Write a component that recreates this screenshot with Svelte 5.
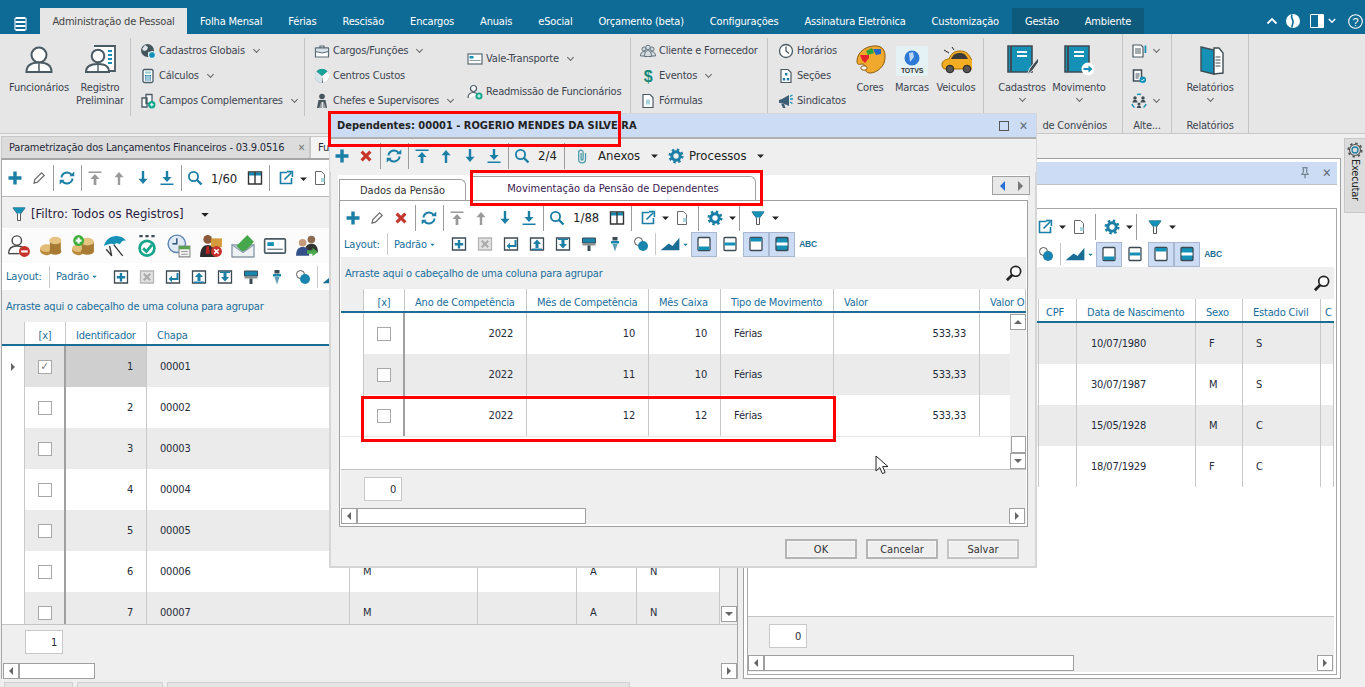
<script>
  const tabs = ['Folha Mensal', 'Férias', 'Rescisão', 'Encargos', 'Anuais', 'eSocial', 'Orçamento (beta)', 'Configurações', 'Assinatura Eletrônica', 'Customização']

  // toolbar tokens: name, name@width, "|" separator, "_n" spacer, "t36:text" label (tn36: no left padding)
  const leftBar = ['plus', 'edit', '|', 'refresh', '|', 'first:off', 'up:off', 'down', 'last', '|', 'search', 't36:1/60', 'columns', '|', '_3', 'export', 'caret@10', 'doc']
  const innerBar = ['plus', 'edit', 'x', '|', 'refresh', '|', 'first:off', 'up:off', 'down', 'last', '|', 'search', 't36:1/88', 'columns', '|', '_3', 'export', 'caret@10', 'doc', '_2', '|', '_3', 'gear', 'caret@10', '|', '_5', 'filter', 'caret@10']
  const rightBar = ['_285', 'export', 'caret@10', 'doc', '_2', '|', '_3', 'gear', 'caret@10', '|', '_5', 'filter', 'caret@10']
  const dialogBar = ['plus', 'x', '|', 'refresh', '|', 'first', 'up', 'down', 'last', '|', 'search', 't28:2/4', '|', '_4', 'clip', 't48:Anexos', '_7', 'caret@10', '_5', 'gear', 'tn67:Processos', 'caret@10']

  const layoutIcons = ['boxplus', 'boxx', 'boxenter', 'boxup', 'boxdown', 'roller', 'tack', 'circles']
  const people = ['personminus', 'coins', 'coinsplus', 'umbrella', 'checkdots', 'clockcal', 'suitx', 'mail', 'idcard', 'peoplego']

  const leftRows = [1, 2, 3, 4, 5, 6, 7].map((n) => ({ n, chapa: '0000' + n, mark: n > 5 }))
  const dialogRows = [[10, 10], [11, 10], [12, 12]]
  const rightRows = [['10/07/1980', 'F', 'S'], ['30/07/1987', 'M', 'S'], ['15/05/1928', 'M', 'C'], ['18/07/1929', 'F', 'C']]

  const D = '#3c4a52'
  const T = '#1591b8'
  const icons = {
    plus: '<path d="M6.3 1.5h3.4v4.8h4.8v3.4H9.7v4.8H6.3V9.7H1.5V6.3h4.8z" fill="#1a7ea6"/>',
    edit: '<path d="M3 13.2l.8-3.6L10.6 2.8l2.6 2.6-6.8 6.8z" fill="#fff" stroke="#6a6a6a" stroke-width="1.2"/>',
    x: '<path d="M2.5 4.7l2.2-2.2L8 5.8l3.3-3.3 2.2 2.2L10.2 8l3.3 3.3-2.2 2.2L8 10.2l-3.3 3.3-2.2-2.2L5.8 8z" fill="#c5352c"/>',
    refresh: '<path d="M2.5 7.5a5.6 5.6 0 0 1 10-2.8M13.5 8.5a5.6 5.6 0 0 1-10 2.8" fill="none" stroke="currentColor" stroke-width="2"/><path d="M10.3 6.2h5V1.6zM5.7 9.8h-5v4.6z" fill="currentColor"/>',
    first: '<path d="M1.5 1.5h13v1.6h-13zM8 4l4.5 5H9.4v6H6.6V9H3.5z" fill="currentColor"/>',
    up: '<path d="M8 2l4.5 5.2H9.2V15H6.8V7.2H3.5z" fill="currentColor"/>',
    down: '<path d="M8 14l4.5-5.2H9.2V1H6.8v7.8H3.5z" fill="currentColor"/>',
    last: '<path d="M1.5 13.4h13V15h-13zM8 12l4.5-5H9.2V1H6.8v6H3.5z" fill="currentColor"/>',
    search: '<circle cx="6.5" cy="6.5" r="4.6" fill="none" stroke="currentColor" stroke-width="1.8"/><path d="M10 10l4.5 4.5" stroke="currentColor" stroke-width="2.4"/>',
    mag: '<circle cx="9.5" cy="6.5" r="4.4" fill="#fff" stroke="#222" stroke-width="1.5"/><path d="M6.3 9.8l-4.6 4.6" stroke="#222" stroke-width="2.4"/>',
    columns: '<path d="M1.5 2h13v12h-13z" fill="#fff" stroke="#333" stroke-width="1.4"/><path d="M2 2.5h12v3H2z" fill="#1a86ad"/><path d="M8 2v12" stroke="#333" stroke-width="1.4"/>',
    export: '<path d="M9 2.5H2.5v11h11V8" fill="none" stroke="currentColor" stroke-width="1.6"/><path d="M6.5 9.5L13 3M9 1.6h5.4V7" fill="none" stroke="currentColor" stroke-width="1.6"/>',
    doc: '<path d="M3.5 1.5h6l3 3v10h-9z" fill="#fff" stroke="#666"/><path d="M9 8h3.5v4H9z" fill="#a8d5de"/>',
    gear: '<circle cx="8" cy="8" r="4.2" fill="none" stroke="currentColor" stroke-width="3"/><circle cx="8" cy="8" r="6.2" fill="none" stroke="currentColor" stroke-width="2.6" stroke-dasharray="2.4 2.47"/>',
    filter: '<path d="M2 2h12L9.5 8v6.5h-3V8z" fill="#fff" stroke="#555"/><path d="M1.5 1.5h13L9.8 7.5H6.2z" fill="#1591b8"/>',
    caret: '<path d="M3 6.5h10L8 11.5z" fill="#222"/>',
    caretb: '<path d="M4 6.5h8L8 10.5z" fill="currentColor"/>',
    clip: '<path d="M11.5 5v6.5a3.4 3.4 0 0 1-6.8 0V4.4a2.2 2.2 0 0 1 4.4 0v6.6a1 1 0 0 1-2 0V5" fill="none" stroke="#4b9aa8" stroke-width="1.3"/>',
    boxplus: `<path d="M1.5 2h13v12h-13z" fill="#fff" stroke="${D}" stroke-width="1.3"/><path d="M6.8 4h2.4v3h3v2.4h-3v3H6.8v-3h-3V7h3z" fill="#1a7ea6"/>`,
    boxx: '<path d="M1.5 2h13v12h-13z" fill="#e2e2e2" stroke="#b5b5b5" stroke-width="1.3"/><path d="M4 5.5L5.5 4 8 6.5 10.5 4 12 5.5 9.5 8l2.5 2.5-1.5 1.5L8 9.5 5.5 12 4 10.5 6.500 8z" fill="#aaa"/>',
    boxenter: `<path d="M1.5 2h13v12h-13z" fill="#fff" stroke="${D}" stroke-width="1.3"/><path d="M11.500 4v5H7V6.800L3.600 10 7 13.200V11h6.500V4z" fill="#1a7ea6"/>`,
    boxup: `<path d="M1.5 2h13v12h-13z" fill="#fff" stroke="${D}" stroke-width="1.3"/><path d="M8 3.500L12 8H9.500v4h-3V8H4zM3 12.500h10V14H3z" fill="#1a7ea6"/>`,
    boxdown: `<path d="M1.5 2h13v12h-13z" fill="#fff" stroke="${D}" stroke-width="1.3"/><path d="M8 12.500L12 8H9.500V4h-3v4H4zM3 2.500h10V4H3z" fill="#1a7ea6"/>`,
    roller: `<path d="M1.500 2h13v5h-13z" fill="#1a86ad" stroke="${D}"/><path d="M1.500 7h13v2.500h-13z" fill="#8a8f92"/><path d="M6.500 9.500h3V15h-3z" fill="${D}"/>`,
    tack: `<path d="M5.500 1h5v3.500h-5z" fill="${D}"/><path d="M4 5h8v2.500H4z" fill="#1a86ad"/><path d="M5.500 8h5L8 15.500z" fill="#5a9db5"/>`,
    circles: `<circle cx="5.500" cy="5.500" r="4" fill="#fff" stroke="#555"/><circle cx="10" cy="10" r="5" fill="#1a86ad"/>`,
    chart: `<path d="M.5 13L7 7.500l3 2L15.500 3v10z" fill="#1a6e96"/>`,
    tbottom: `<rect x="2" y="1.500" width="12" height="13" rx="1" fill="#fff" stroke="${D}" stroke-width="1.300"/><path d="M2.500 10.500h11v3.500h-11z" fill="${T}"/>`,
    tmid: `<rect x="2" y="1.500" width="12" height="13" rx="1" fill="#fff" stroke="${D}" stroke-width="1.300"/><path d="M2.500 6.500h11v3h-11z" fill="${T}"/>`,
    ttop: `<rect x="2" y="1.500" width="12" height="13" rx="1" fill="#fff" stroke="${D}" stroke-width="1.300"/><path d="M2.500 2h11v3.500h-11z" fill="${T}"/>`,
    tboth: `<rect x="2" y="1.500" width="12" height="13" rx="1" fill="${T}" stroke="${D}" stroke-width="1.300"/><path d="M2.500 6.500h11v3h-11z" fill="#fff"/>`,
    abc: '<text x="8" y="10.500" text-anchor="middle" font-family="Liberation Sans" font-weight="700" font-size="7.500" fill="#1a6e96">ABC</text>',
    pin: '<path d="M5 2h6M6 2.500v5L4 9.500h8l-2-2v-5M8 9.500V14" fill="none" stroke="#5a6a75" stroke-width="1.100"/>',
    gearo: '<circle cx="8" cy="8" r="3" fill="none" stroke="#1a7ea6" stroke-width="1.300"/><circle cx="8" cy="8" r="5.500" fill="none" stroke="#555" stroke-width="1.200"/><circle cx="8" cy="8" r="6.800" fill="none" stroke="#555" stroke-width="1.600" stroke-dasharray="2.500 2.840"/>',

    // ribbon, small
    globe: '<circle cx="7.500" cy="7.500" r="6.500" fill="#46545c"/><path d="M5 2l3 2-1 3-3 1-2-2zM8 9l4 1-2 4-2-1z" fill="#dfe6ea"/><circle cx="12" cy="12" r="3.500" fill="#1591b8" stroke="#fff"/>',
    calc: '<rect x="3" y="1.500" width="10" height="13" rx="1.500" fill="#fff" stroke="#4a5a63" stroke-width="1.300"/><path d="M5 3.500h6v2H5z" fill="#9cc"/><path d="M5 7h6v5.500H5z" fill="#1a7ea6"/><path d="M7 7v5.500M9 7v5.500M5 9h6M5 11h6" stroke="#fff" stroke-width=".7"/>',
    campos: '<path d="M2 5h5v9H2zM6 1.500h6v9H6z" fill="#fff" stroke="#4a5a63" stroke-width="1.300"/><circle cx="11.800" cy="11.800" r="3.700" fill="#12a88f"/><path d="M10 11.300h1.300V10h1v1.300h1.300v1h-1.300v1.300h-1v-1.300H10z" fill="#fff"/>',
    brief: '<path d="M1.500 5h13v9h-13z" fill="#fff" stroke="#5a6a73" stroke-width="1.200"/><path d="M1.500 5h13v3.500L8 10 1.500 8.500z" fill="#d7e5ea" stroke="#5a6a73"/><path d="M6 5V3h4v2" fill="none" stroke="#5a6a73" stroke-width="1.200"/>',
    pie: '<circle cx="8" cy="8" r="7" fill="#46545c"/><path d="M8 8L2.500 3.500a7 7 0 0 1 11 0z" fill="#15a39b"/><path d="M8 8l5.500-4.500A7 7 0 0 1 9 15z" fill="#fff"/><path d="M8 8v7a7 7 0 0 1-5.500-11.500z" fill="#d7e5ea"/>',
    chief: '<circle cx="8" cy="3.500" r="2.800" fill="#46545c"/><path d="M4.500 7h7l1.500 8h-1.500l-1-5.500v5.500h-1V9H7.500v6h-1V9.500l-1 5.500H3z" fill="#46545c"/>',
    card: '<rect x="1" y="3" width="14" height="10" fill="#fff" stroke="#5a6a73" stroke-width="1.200"/><path d="M2.500 5h4v2.500h-4z" fill="#1591b8"/><path d="M2.500 9.500h11" stroke="#8a979e"/>',
    readm: '<circle cx="6.500" cy="4.500" r="3" fill="#fff" stroke="#4a5a63" stroke-width="1.200"/><path d="M1 14c0-4 2.500-5.500 5.500-5.500S10 9.500 10.500 11" fill="#fff" stroke="#4a5a63" stroke-width="1.200"/><circle cx="12" cy="12" r="3.500" fill="#12a88f"/><path d="M10.300 11.500h1.200v-1.200h1v1.200h1.200v1h-1.200v1.200h-1v-1.200h-1.200z" fill="#fff"/>',
    people: '<g fill="#d5dbde" stroke="#5a6a73" stroke-width=".9"><circle cx="4" cy="6" r="2"/><circle cx="12" cy="6" r="2"/><path d="M0.500 13c0-3 1.500-4.500 3.500-4.500S7 10 7 13zM9 13c0-3 1.500-4.500 3-4.500s3.500 1.500 3.500 4.500z"/><circle cx="8" cy="4.500" r="2.300"/><path d="M4.500 13.500c0-4 1.500-6 3.500-6s3.500 2 3.500 6z"/></g>',
    dollar: '<text x="8" y="14" text-anchor="middle" font-family="Liberation Sans" font-weight="700" font-size="16" fill="#138a78">$</text>',
    formula: '<path d="M3 1.500h7l3 3v10H3z" fill="#fff" stroke="#4a5a63" stroke-width="1.200"/><path d="M6 6.500h4v5H6z" fill="#a8d5de"/>',
    clock: '<circle cx="8" cy="8" r="6.500" fill="#fff" stroke="#4a5a63" stroke-width="1.300"/><path d="M8 3.500V8l3 2.500" fill="none" stroke="#4a5a63" stroke-width="1.300"/>',
    secoes: '<path d="M3 1.500h7l3 3v10H3z" fill="#fff" stroke="#4a5a63" stroke-width="1.200"/><path d="M7 5h2.400v2.400H7zM4.800 10h2.400v2.400H4.800zM8.800 10h2.400v2.400H8.800z" fill="#1a7ea6"/>',
    mega: '<path d="M1 7l3-1 7-4v11L4 10H1z" fill="#3d5f75"/><path d="M3 10.500h3L7.500 15H5z" fill="#3d5f75"/><path d="M12 6h3M12 3.500l2.500-1.500M12 9l2.500 1.500" stroke="#1591b8" stroke-width="1.300"/>',
    doclist: '<path d="M2 2h8l2 2v10H2z" fill="#fff" stroke="#4a5a63" stroke-width="1.200"/><path d="M4 6h6M4 8h6M4 10h6" stroke="#4a5a63"/><path d="M13.500 2.500h1.800V10h-1.800z" fill="#1591b8"/>',
    doccheck: '<path d="M2.500 2h8v11h-8z" fill="#fff" stroke="#3f4c53" stroke-width="1.500"/><path d="M4.500 6h4M4.500 8h4M4.500 10h3" stroke="#3f4c53"/><circle cx="11.800" cy="11.800" r="3.300" fill="#1591b8"/><path d="M10.300 11.800l1.100 1.100 2-2" fill="none" stroke="#fff"/>',
    cycle: '<g fill="#3f4c53"><circle cx="4" cy="5" r="1.700"/><path d="M1.500 9.500C1.500 7.500 2.500 7 4 7s2.500.5 2.500 2.500z"/><circle cx="12" cy="5" r="1.700"/><path d="M9.500 9.500c0-2 1-2.500 2.500-2.500s2.500.5 2.500 2.500z"/><circle cx="8" cy="11" r="1.500"/><path d="M5.800 15c0-1.800 1-2.300 2.200-2.300s2.200.5 2.200 2.300z"/></g><path d="M6 1.500a7 7 0 0 1 4 0M1 11a7 7 0 0 0 2.500 3.500M15 11a7 7 0 0 1-2.500 3.500" fill="none" stroke="#1591b8" stroke-width="1.500"/>',

    // row of coloured icons
    personminus: '<circle cx="9" cy="6" r="4.300" fill="#fff" stroke="#4a4a4a" stroke-width="1.300"/><path d="M1.500 18c0-5 3.500-7 7.500-7s6 1 7 3" fill="#fff" stroke="#4a4a4a" stroke-width="1.300"/><path d="M1.500 18h10" stroke="#4a4a4a" stroke-width="1.300"/><circle cx="16" cy="16" r="5" fill="#c8322c"/><path d="M13 15h6v2h-6z" fill="#fff"/>',
    coins: '<ellipse cx="7" cy="15" rx="6" ry="4.500" fill="#b98a3c"/><ellipse cx="7" cy="13" rx="6" ry="3.500" fill="#e2bd78"/><path d="M10 6h10v10H10z" fill="#a77b33"/><ellipse cx="15" cy="6" rx="5.500" ry="3.500" fill="#e6c482"/><ellipse cx="15" cy="16" rx="5.500" ry="3" fill="#a77b33"/>',
    coinsplus: '<ellipse cx="7" cy="15" rx="6" ry="4.500" fill="#b98a3c"/><ellipse cx="7" cy="13" rx="6" ry="3.500" fill="#e2bd78"/><path d="M10 7h11v9H10z" fill="#a77b33"/><ellipse cx="15" cy="7" rx="6" ry="3.500" fill="#e6c482"/><ellipse cx="15" cy="16" rx="6" ry="3" fill="#a77b33"/><circle cx="7" cy="6" r="5" fill="#3fae3c"/><path d="M4.300 5h1.700V3.300h2V5h1.700v2H8v1.700H6V7H4.300z" fill="#fff"/>',
    umbrella: '<path d="M1 11C2 5 8 1 14 2c3 .5 5 1.500 7 4-4-.5-4 2-6 3.500-1.500-1.500-3.500-1.500-5 .5-1.500-2-5.500-.5-9 1z" fill="#1591b8"/><path d="M3 14l5 6-2-9M10 10l8 10" fill="none" stroke="#333" stroke-width="1.200"/>',
    checkdots: '<circle cx="11" cy="13" r="8" fill="#14a58a"/><circle cx="11" cy="13" r="5.500" fill="#fff"/><path d="M7.500 13l3 3 5-6" fill="none" stroke="#14a58a" stroke-width="2.600"/><path d="M4 1h3v2H4zM9.500 1h3v2h-3zM15 1h3v2h-3z" fill="#3f4c53"/>',
    clockcal: '<circle cx="9" cy="9" r="8" fill="#dfeaf4" stroke="#5b84b0" stroke-width="1.300"/><path d="M9 4v5H5" fill="none" stroke="#2c4f78" stroke-width="1.300"/><path d="M11 11h10v10H11z" fill="#f3f3f3" stroke="#888"/><path d="M11 11h10v3H11z" fill="#59a14f"/><path d="M13 16h6M13 18.500h6" stroke="#999"/>',
    suitx: '<circle cx="8" cy="5" r="4" fill="#8b5a3c"/><path d="M1 21c0-8 3-11 7-11s7 3 7 11z" fill="#2c2a2a"/><path d="M7 11h2l1 7H6z" fill="#b22"/><path d="M11 4h10v8H11z" fill="#d49b3c"/><circle cx="16" cy="16" r="5" fill="#c8322c"/><path d="M14 14l4 4m0-4l-4 4" stroke="#fff" stroke-width="1.400"/>',
    mail: '<path d="M1 10h20v11H1z" fill="#d4dadf" stroke="#8a9aa8"/><path d="M5 11L15 1l6 6-7 8-4 1z" fill="#46a84a"/><path d="M1 10l10 7 10-7v11H1z" fill="#eef1f3" stroke="#8a9aa8"/>',
    idcard: '<rect x="1.500" y="4.500" width="19" height="13" rx="1" fill="#fff" stroke="#4a5a63" stroke-width="1.500"/><path d="M4 7.500h6v3.500H4z" fill="#1591b8"/><path d="M4 14h14" stroke="#6e7c84" stroke-width="1.200"/>',
    peoplego: '<circle cx="15" cy="5" r="3.500" fill="#8b6a50"/><path d="M9 17c0-6 2.500-8 6-8s6 2 6 8z" fill="#333"/><circle cx="7" cy="8" r="3.500" fill="#c39a7a"/><path d="M1 20c0-6 2.500-8 6-8s6 2 6 8z" fill="#33508a"/><path d="M11 15h5v-2.500l5 4-5 4V18h-5z" fill="#46a84a"/>',

    // ribbon, large
    person: '<circle cx="16" cy="11" r="7.500" fill="#fff" stroke="#4a5a63" stroke-width="2"/><path d="M3.500 28c0-6 4.500-9.500 12.500-9.500S28.500 22 28.500 28z" fill="#fff" stroke="#4a5a63" stroke-width="2"/><path d="M16 19v9" stroke="#4a5a63" stroke-width="1.500"/>',
    registro: '<path d="M10 2h21v25H14" fill="#fff" stroke="#4a5a63" stroke-width="1.800"/><path d="M24 7h4M24 11h4M24 15h4M24 19h4" stroke="#1591b8" stroke-width="2"/><circle cx="14" cy="12" r="6.300" fill="#fff" stroke="#4a5a63" stroke-width="2"/><path d="M2 28c0-5.500 4-8 12-8s11 2.500 11 8z" fill="#fff" stroke="#4a5a63" stroke-width="2"/><path d="M14 20v8" stroke="#4a5a63" stroke-width="1.400"/>',
    palette: '<path d="M3 17C3 7 14 1 23 2s9 10 7 17c-2 5-8 10-14 10-4 0-5-3-5-6 0-2-1-3-3-3s-5 2-5-3z" fill="#f0a92d" stroke="#8a5a10"/><ellipse cx="10" cy="24" rx="3.200" ry="2.200" fill="#f6f6f6" stroke="#8a5a10"/><path d="M6 11h9v3l-4 5-3-3z" fill="#e2232a"/><path d="M12 7l6-3 2 5-6 2z" fill="#2aa339"/><path d="M19 5h8v5l-5 1z" fill="#1f67c9"/>',
    marcas: '<path d="M0 2h32v32H0z" fill="#e4f2f5"/><circle cx="16" cy="14" r="7.500" fill="#2c79d6"/><path d="M13 9l4-1 1 5-4 5z" fill="#bcd7f5"/><text x="16" y="29" text-anchor="middle" font-family="Liberation Sans" font-weight="700" font-size="7" fill="#333">TOTVS</text>',
    car: '<path d="M2 20c0-3 4-5 7-5 2-5 5-8 11-8s9 3 11 8c2 1 3 3 3 6 0 2-1 4-3 4H5c-2 0-3-2-3-5z" fill="#f2ad22" stroke="#a66d00"/><path d="M11 15c2-4 4-6 9-6 4 0 6 2 8 6z" fill="#3a3a3a"/><circle cx="10" cy="25" r="3.800" fill="#555" stroke="#222"/><circle cx="27" cy="25" r="3.800" fill="#555" stroke="#222"/><path d="M4 6l5 3M12 3l2 3" stroke="#222"/>',
    bookpen: `<path d="M2 2h24v26H2z" fill="${T}" stroke="#3f4c53" stroke-width="1.600"/><path d="M5 2v26" stroke="#3f4c53" stroke-width="2"/><path d="M11 7h10v2H11zM11 11h10v2H11z" fill="#fff"/><path d="M21 31l3-7 8-10 2 2-7 10z" fill="#3f4c53" stroke="#e6e6e6"/>`,
    bookgo: `<path d="M2 2h24v26H2z" fill="${T}" stroke="#3f4c53" stroke-width="1.600"/><path d="M5 2v26" stroke="#3f4c53" stroke-width="2"/><path d="M11 7h10v2H11zM11 11h10v2H11z" fill="#fff"/><circle cx="25" cy="25" r="6.500" fill="#fff"/><path d="M20.500 24h5v-2.500l4 3.500-4 3.500V26h-5z" fill="${T}"/>`,
    report: `<path d="M7 3l13 3v24l-13-3z" fill="${T}" stroke="#3f4c53" stroke-width="1.400"/><path d="M20 4h5l4 5v20l-9 1z" fill="#fff" stroke="#3f4c53" stroke-width="1.400"/><path d="M21.500 13h5M21.500 16h5M21.500 19h5M21.500 22h5" stroke="#3f4c53" stroke-width="1.200"/>`
  }

  function token(s) {
    if (s === '|') return { kind: 'sep' }
    if (s[0] === '_') return { kind: 'gap', w: +s.slice(1) }
    const m = s.match(/^t(n?)(\d+):(.+)$/)
    if (m) return { kind: 'text', tight: !!m[1], w: +m[2], text: m[3] }
    const [body, w] = s.split('@')
    const [name, off] = body.split(':')
    return { kind: 'icon', name, off, w: w ? +w : 24 }
  }
</script>

{#snippet ic(name, size = 16, cls = '', box = 16)}
  <svg class="ic {cls}" width={size} height={size} viewBox="0 0 {box} {box}">{@html icons[name]}</svg>
{/snippet}

{#snippet toolbar(items)}
  {#each items.map(token) as t}
    {#if t.kind === 'sep'}
      <span class="tb-sep"></span>
    {:else if t.kind === 'gap'}
      <span class="tb-gap" style:width="{t.w}px"></span>
    {:else if t.kind === 'text'}
      <span class="tb-text" class:tight={t.tight} style:width="{t.w}px">{t.text}</span>
    {:else}
      <span class="tb-btn" style:width="{t.w}px">{@render ic(t.name, t.w < 24 ? 11 : 16, t.off ? 'off' : '')}</span>
    {/if}
  {/each}
{/snippet}

<!-- part: 'all', 'start' (only up to the chart) or 'end' (labels sit under the dialog) -->
{#snippet layoutRow(cls, part = 'all')}
  <div class="layout {cls}">
    {#if part === 'end'}
      <span class="lay-label"></span>
      <span class="lay-sep"></span>
      <span class="lay-pick"></span>
    {:else}
      <span class="lay-label">Layout:</span>
      <span class="lay-sep"></span>
      <span class="lay-pick">Padrão {@render ic('caretb', 9)}</span>
    {/if}
    {#each layoutIcons as name}
      <span class="lay-btn">{@render ic(name, 16)}</span>
    {/each}
    <span class="lay-sep tight"></span>
    <span class="lay-chart">{@render ic('chart', 20)}</span>
    {#if part !== 'start'}
      <span class="lay-caret">{@render ic('caretb', 9)}</span>
      <span class="lay-btn on">{@render ic('tbottom', 16)}</span>
      <span class="lay-btn">{@render ic('tmid', 16)}</span>
      <span class="lay-btn on">{@render ic('ttop', 16)}</span>
      <span class="lay-btn on">{@render ic('tboth', 16)}</span>
      <span class="lay-btn">{@render ic('abc', 18)}</span>
    {/if}
  </div>
{/snippet}

{#snippet rowLink(icon, label, chevron)}
  <div class="rlink">
    <span class="rlink-ic">{@render ic(icon, 16)}</span>
    <span>{label}</span>
    {#if chevron}<span class="chev"></span>{/if}
  </div>
{/snippet}

{#snippet bigBtn(icon, lines, chevron, cls = '')}
  <div class="big {cls}">
    <span class="big-ic">{@render ic(icon, 32, '', 32)}</span>
    {#each lines as l}<span>{l}</span>{/each}
    {#if chevron}<span class="chev down"></span>{/if}
  </div>
{/snippet}

{#snippet arrowBtn(dir)}
  <span class="sbtn"><i class={dir}></i></span>
{/snippet}

{#snippet footer(cls, value)}
  <div class="foot {cls}">
    <div class="count">{value}</div>
    <div class="hscroll">
      <div class="hthumb">{@render arrowBtn('left')}<span class="thumb"></span></div>
      {@render arrowBtn('right')}
    </div>
  </div>
{/snippet}

<div class="app">
  <header class="top">
    <span class="menu">
      <svg width="13" height="14" viewBox="0 0 13 14"><path d="M1.500 1h10M1.500 5h10M1.500 9h10M1.500 13h10" stroke="#fff" stroke-width="2"/><path d="M1 1v12M12 1v12" stroke="#fff"/></svg>
    </span>
    <nav class="tabs">
      <span class="tab active">Administração de Pessoal</span>
      {#each tabs as t}<span class="tab">{t}</span>{/each}
      <span class="dark">
        <span class="tab">Gestão</span>
        <span class="tab">Ambiente</span>
      </span>
    </nav>
    <div class="top-right">
      <svg width="12" height="12" viewBox="0 0 12 12"><path d="M1.500 8.500L6 4l4.500 4.500" fill="none" stroke="#fff" stroke-width="1.800"/></svg>
      <svg width="16" height="16" viewBox="0 0 16 16"><circle cx="8" cy="8" r="7" fill="#fff"/><path d="M7 1.500c-2 4 2 5 1 8-.5 2-1 3-1 5" fill="none" stroke="#0d6b96" stroke-width="1.600"/></svg>
      <svg class="tr-win" width="14" height="14" viewBox="0 0 14 14"><path d="M.5.5h13v13H.5zM8.500.5v13" fill="none" stroke="#fff"/><path d="M9 1h4v12H9z" fill="#fff"/></svg>
      <svg class="tr-chev" width="8" height="8" viewBox="0 0 8 8"><path d="M.8 2l3.200 3.200L7.200 2" fill="none" stroke="#fff" stroke-width="1.400"/></svg>
      <svg class="tr-help" width="15" height="15" viewBox="0 0 15 15"><circle cx="7.500" cy="7.500" r="6.800" fill="none" stroke="#fff" stroke-width="1.100"/><text x="7.500" y="11.500" text-anchor="middle" font-family="Liberation Sans" font-size="11" fill="#fff">?</text></svg>
    </div>
  </header>

  <section class="ribbon">
    <div class="rg g1">
      {@render bigBtn('person', ['Funcionários'], false, 'b-func')}
      {@render bigBtn('registro', ['Registro', 'Preliminar'], false, 'b-reg')}
    </div>
    <div class="rg g2 rcol">
      {@render rowLink('globe', 'Cadastros Globais', true)}
      {@render rowLink('calc', 'Cálculos', true)}
      {@render rowLink('campos', 'Campos Complementares', true)}
    </div>
    <div class="rg g3">
      <div class="rcol">
        {@render rowLink('brief', 'Cargos/Funções', true)}
        {@render rowLink('pie', 'Centros Custos', false)}
        {@render rowLink('chief', 'Chefes e Supervisores', true)}
      </div>
      <div class="rcol two">
        {@render rowLink('card', 'Vale-Transporte', true)}
        {@render rowLink('readm', 'Readmissão de Funcionários', false)}
      </div>
    </div>
    <div class="rg g4 rcol">
      {@render rowLink('people', 'Cliente e Fornecedor', false)}
      {@render rowLink('dollar', 'Eventos', true)}
      {@render rowLink('formula', 'Fórmulas', false)}
    </div>
    <div class="rg g5">
      <div class="rcol">
        {@render rowLink('clock', 'Horários', false)}
        {@render rowLink('secoes', 'Seções', false)}
        {@render rowLink('mega', 'Sindicatos', false)}
      </div>
      {@render bigBtn('palette', ['Cores'], false, 'b-cores')}
      {@render bigBtn('marcas', ['Marcas'], false, 'b-marcas')}
      {@render bigBtn('car', ['Veiculos'], false, 'b-car')}
    </div>
    <div class="rg g6 tall">
      <div class="rg-body">
        {@render bigBtn('bookpen', ['Cadastros'], true, 'b-cad')}
        {@render bigBtn('bookgo', ['Movimento'], true, 'b-mov')}
      </div>
      <div class="rg-label conv">de Convênios</div>
    </div>
    <div class="rg g7 tall">
      <div class="rg-col">
        <div class="mini">{@render ic('doclist', 16)}<span class="chev"></span></div>
        <div class="mini">{@render ic('doccheck', 16)}</div>
        <div class="mini">{@render ic('cycle', 16)}<span class="chev"></span></div>
      </div>
      <div class="rg-label">Alte...</div>
    </div>
    <div class="rg g8 tall">
      <div class="rg-body">
        {@render bigBtn('report', ['Relatórios'], true, 'b-rel')}
      </div>
      <div class="rg-label">Relatórios</div>
    </div>
  </section>

  <main class="work">
    <div class="col-left">
      <div class="doc-tabs">
        <span class="doc-tab">Parametrização dos Lançamentos Financeiros - 03.9.0516 <b>✕</b></span>
        <span class="doc-tab cur">Fu</span>
      </div>
      <div class="win">
        <div class="bar bar-left">{@render toolbar(leftBar)}</div>
        <div class="filter">
          {@render ic('filter', 16)}
          <span>[Filtro: Todos os Registros]</span>
          {@render ic('caret', 12)}
        </div>
        <div class="people">
          {#each people as p}
            <span class="pbtn">{@render ic(p, 24, '', 22)}</span>
          {/each}
        </div>
        {@render layoutRow('lay-left', 'start')}
        <div class="group grp-left">Arraste aqui o cabeçalho de uma coluna para agrupar</div>
        <div class="grid-wrap left-wrap">
          <div class="grid-main">
            <div class="row head l-cols">
              <span class="c ind"></span>
              <span class="c chk">[x]</span>
              <span class="c">Identificador</span>
              <span class="c">Chapa</span>
              <span class="c"></span><span class="c"></span><span class="c"></span><span class="c"></span>
            </div>
            {#each leftRows as r, i}
              <div class="row l-cols" class:alt={i % 2 === 0}>
                <span class="c ind">{#if i === 0}<i class="right small"></i>{/if}</span>
                <span class="c chk" class:sel={i === 0}><span class="box" class:ticked={i === 0}>{#if i === 0}✓{/if}</span></span>
                <span class="c num pad" class:sel={i === 0}>{r.n}</span>
                <span class="c pad">{r.chapa}</span>
                <span class="c pad">{r.mark ? 'M' : ''}</span>
                <span class="c"></span>
                <span class="c pad">{r.mark ? 'A' : ''}</span>
                <span class="c pad">{r.mark ? 'N' : ''}</span>
              </div>
            {/each}
          </div>
          <div class="vscroll end">{@render arrowBtn('down')}</div>
        </div>
        {@render footer('f-left', 1)}
      </div>
      <div class="bottom-tabs">
        <span class="bt b1"></span><span class="bt b2"></span><span class="bt b3"></span>
      </div>
    </div>

    <div class="rwin">
      <div class="r-title">
        <span>{@render ic('pin', 14)}</span>
        <span class="r-close">✕</span>
      </div>
      <div class="r-blank"></div>
      <div class="r-inner">
        <div class="bar bar-right">{@render toolbar(rightBar)}</div>
        {@render layoutRow('lay-right', 'end')}
        <div class="group grp-right"><span></span>{@render ic('mag', 18)}</div>
        <div class="row head r-cols">
          <span class="c"></span>
          <span class="c cpf">CPF</span>
          <span class="c">Data de Nascimento</span>
          <span class="c">Sexo</span>
          <span class="c">Estado Civil</span>
          <span class="c clip">C</span>
        </div>
        <div class="r-body">
          {#each rightRows as r, i}
            <div class="row r-cols" class:alt={i % 2 === 0}>
              <span class="c"></span>
              <span class="c"></span>
              <span class="c pad wide">{r[0]}</span>
              <span class="c pad">{r[1]}</span>
              <span class="c pad">{r[2]}</span>
              <span class="c"></span>
            </div>
          {/each}
        </div>
        {@render footer('f-right', 0)}
      </div>
    </div>

    <aside class="side">
      {@render ic('gearo', 16)}
      <span>Executar</span>
    </aside>
  </main>

  <!-- janela modal, fica sobre o resto -->
  <section class="dialog">
    <div class="d-title">
      <b>Dependentes: 00001 - ROGERIO MENDES DA SILVEIRA</b>
      <span class="d-ctrl"><i class="sq"></i><span class="r-close">✕</span></span>
    </div>
    <div class="bar bar-dialog">{@render toolbar(dialogBar)}</div>
    <div class="d-tabs">
      <span class="d-tab">Dados da Pensão</span>
      <span class="d-tab cur">Movimentação da Pensão de Dependentes</span>
      <span class="d-arrows"><i class="tri-l"></i><i class="tri-r"></i></span>
    </div>
    <div class="d-panel">
      <div class="bar bar-inner">{@render toolbar(innerBar)}</div>
      {@render layoutRow('lay-dialog')}
      <div class="group grp-dialog"><span>Arraste aqui o cabeçalho de uma coluna para agrupar</span>{@render ic('mag', 18)}</div>
      <div class="row head d-head">
        <span class="c ind"></span>
        <span class="c chk">[x]</span>
        <span class="c">Ano de Competência</span>
        <span class="c">Mês de Competência</span>
        <span class="c">Mês Caixa</span>
        <span class="c">Tipo de Movimento</span>
        <span class="c">Valor</span>
        <span class="c">Valor Or</span>
      </div>
      <div class="grid-wrap d-wrap">
        <div class="grid-main">
          {#each dialogRows as r, i}
            <div class="row d-cols" class:alt={i === 1}>
              <span class="c ind"></span>
              <span class="c chk"><span class="box"></span></span>
              <span class="c num pad">2022</span>
              <span class="c num pad">{r[0]}</span>
              <span class="c num pad">{r[1]}</span>
              <span class="c pad">Férias</span>
              <span class="c num pad">533,33</span>
              <span class="c"></span>
            </div>
          {/each}
        </div>
        <div class="vscroll">
          {@render arrowBtn('up')}
          <span class="vthumb"></span>
          {@render arrowBtn('down')}
        </div>
      </div>
      {@render footer('f-dialog', 0)}
    </div>
    <div class="d-actions">
      <button>OK</button>
      <button>Cancelar</button>
      <button class="def">Salvar</button>
    </div>
  </section>

  <div class="mark m1"></div>
  <div class="mark m2"></div>
  <div class="mark m3"></div>

  <svg class="cursor" width="15" height="21" viewBox="0 0 15 21">
    <path d="M1 1v15l3.800-3.400 2.600 6 2.800-1.200-2.600-5.800H13z" fill="#fff" stroke="#222" stroke-width="1"/>
  </svg>
</div>

<style>
  :global(body) {
    margin: 0;
  }

  .app {
    position: relative;
    width: 1365px;
    height: 687px;
    overflow: hidden;
    background: #efefef;
    font-family: "DejaVu Sans Condensed", "DejaVu Sans", sans-serif;
    font-size: 11px;
    letter-spacing: -0.2px;
    color: #262b3a;
  }

  .ic {
    display: block;
    flex: none;
    color: #1a7ea6;
  }
  .ic.off {
    color: #9a9a9a;
  }

  /* barra superior */
  .top {
    display: flex;
    height: 34px;
    background: #0d6b96;
    color: #fff;
  }
  .menu {
    display: flex;
    width: 40px;
    padding: 17px 0 0 14px;
    box-sizing: border-box;
  }
  .tabs {
    display: flex;
    padding-top: 8px;
    letter-spacing: -0.18px;
  }
  .tab {
    display: flex;
    align-items: center;
    padding: 0 13px;
    height: 26px;
    white-space: nowrap;
  }
  .tab.active {
    background: #e6e6e6;
    color: #444;
    width: 147px;
    box-sizing: border-box;
    justify-content: center;
    padding: 0;
  }
  .dark {
    display: flex;
    background: #0d5a7c;
  }
  .top-right {
    display: flex;
    align-items: center;
    margin-left: auto;
    padding: 8px 2px 0 0;
    gap: 7px;
  }
  .tr-win {
    margin-left: 2px;
  }
  .tr-chev {
    margin-left: -3px;
  }
  .tr-help {
    margin-left: 5px;
  }

  /* ribbon */
  .ribbon {
    display: flex;
    height: 100px;
    background: #e6e6e6;
    border-bottom: 1px solid #c8c8c8;
    box-sizing: border-box;
  }
  .rg {
    display: flex;
    flex: none;
    box-sizing: border-box;
    height: 78px;
    margin-top: 4px;
    border-right: 1px solid #c4c4c4;
    color: #3c4450;
  }
  .rg.tall {
    height: 99px;
    margin-top: 0;
    flex-direction: column;
    padding-top: 4px;
  }
  .g1 { width: 131px; }
  .g2 { width: 174px; padding-left: 9px; }
  .g3 { width: 326px; padding-left: 9px; }
  .g4 { width: 137px; padding-left: 9px; }
  .g5 { width: 216px; padding-left: 10px; }
  .g6 { width: 139px; }
  .g7 { width: 49px; }
  .g8 { width: 77px; }

  .rcol {
    display: flex;
    flex-direction: column;
  }
  .rcol.two {
    margin-left: 14px;
    gap: 8px;
    padding-top: 8px;
  }
  .rlink {
    display: flex;
    align-items: center;
    height: 25px;
    white-space: nowrap;
  }
  .rlink-ic {
    width: 19px;
  }
  .chev {
    width: 4px;
    height: 4px;
    margin-left: 9px;
    margin-top: -3px;
    border-right: 1.5px solid #666;
    border-bottom: 1.5px solid #666;
    transform: rotate(45deg);
  }
  .chev.down {
    margin: -2px 0 0;
  }

  .big {
    display: flex;
    flex-direction: column;
    align-items: center;
    line-height: 13px;
    white-space: nowrap;
  }
  .big-ic {
    height: 35px;
    padding-top: 6px;
    margin-bottom: 2px;
  }
  .b-func { width: 68px; margin-left: 5px; }
  .b-reg { width: 54px; }
  .b-cores { width: 40px; margin-left: 4px; }
  .b-marcas { width: 42px; margin-left: 1px; }
  .b-car { width: 46px; }
  .b-cad { width: 56px; margin-left: 10px; }
  .b-mov { width: 58px; }
  .b-rel { width: 76px; }
  .rg-body {
    display: flex;
    flex: 1;
  }
  .rg-body .big .chev {
    margin-top: 2px;
  }
  .rg-label {
    height: 14px;
    line-height: 13px;
    text-align: center;
    white-space: nowrap;
  }
  .rg-label.conv {
    text-align: right;
    padding-right: 15px;
  }
  .rg-col {
    flex: 1;
    display: flex;
    flex-direction: column;
  }
  .mini {
    display: flex;
    align-items: center;
    height: 25px;
    padding-left: 8px;
  }
  .mini .chev {
    margin-left: 7px;
  }

  /* area de trabalho */
  .work {
    display: flex;
    height: 553px;
  }
  .col-left {
    width: 743px;
    flex: none;
    padding-left: 1px;
    box-sizing: border-box;
  }
  .doc-tabs {
    display: flex;
    height: 24px;
    padding-top: 2px;
    box-sizing: border-box;
  }
  .doc-tab {
    display: flex;
    align-items: center;
    justify-content: space-between;
    width: 309px;
    padding: 0 4px 0 7px;
    box-sizing: border-box;
    background: #dcdcdc;
    border: 1px solid #c8c8c8;
    border-bottom: 0;
    white-space: nowrap;
  }
  .doc-tab b {
    font-weight: 400;
    color: #777;
    font-size: 10px;
  }
  .doc-tab.cur {
    width: 120px;
    background: #f4f4f4;
  }

  .win {
    display: flex;
    flex-direction: column;
    width: 737px;
    height: 521px;
    box-sizing: border-box;
    border: 1px solid #a6a6a6;
    border-top-width: 2px;
    background: #fff;
  }
  .bar {
    display: flex;
    align-items: center;
    flex: none;
    white-space: nowrap;
    overflow: hidden;
  }
  .tb-btn, .tb-gap {
    display: flex;
    justify-content: center;
    flex: none;
  }
  .tb-text {
    flex: none;
    padding-left: 4px;
    box-sizing: border-box;
    font-size: 13px;
    letter-spacing: 0;
    color: #222;
  }
  .tb-text.tight {
    padding-left: 1px;
  }
  .tb-sep {
    flex: none;
    width: 1px;
    height: 26px;
    margin: 0 1px 0 2px;
    background: #9c9c9c;
  }
  .bar-left {
    height: 36px;
    padding-left: 1px;
    border-bottom: 1px solid #b9b9b9;
  }
  .filter {
    display: flex;
    align-items: center;
    flex: none;
    gap: 4px;
    height: 31px;
    padding: 2px 0 0 9px;
    box-sizing: border-box;
    background: #f0f0f0;
    font-size: 13px;
    letter-spacing: 0;
    color: #2a2140;
  }
  .filter span {
    width: 164px;
    white-space: nowrap;
  }
  .people {
    display: flex;
    flex: none;
    align-items: center;
    height: 35px;
    padding-left: 1px;
    border-top: 1px solid #fff;
    box-sizing: border-box;
    background: #fbfbfb;
  }
  .pbtn {
    width: 32px;
    display: flex;
    justify-content: center;
  }

  .layout {
    display: flex;
    align-items: center;
    flex: none;
    white-space: nowrap;
    overflow: hidden;
    height: 27px;
    background: #fff;
  }
  .lay-label {
    flex: none;
    width: 43px;
    color: #1a6e9c;
  }
  .lay-sep {
    flex: none;
    width: 1px;
    height: 22px;
    background: #c8c8c8;
    margin-right: 6px;
  }
  .lay-sep.tight {
    margin: 0 3px 0 1px;
  }
  .lay-pick {
    display: flex;
    align-items: center;
    flex: none;
    width: 52px;
    gap: 1px;
    color: #1a6e9c;
  }
  .lay-btn {
    display: flex;
    align-items: center;
    justify-content: center;
    flex: none;
    width: 26px;
    height: 25px;
    box-sizing: border-box;
  }
  .lay-btn.on {
    background: #cddcf5;
    border: 1px solid #a9b8d0;
  }
  .lay-chart {
    width: 22px;
    display: flex;
    justify-content: center;
  }
  .lay-caret {
    width: 10px;
  }
  .lay-left { padding-left: 4px; }
  .lay-right { padding-left: 1px; height: 26px; }
  .lay-dialog { padding-left: 3px; height: 26px; }

  .group {
    display: flex;
    align-items: center;
    justify-content: space-between;
    flex: none;
    height: 32px;
    background: #efefef;
    color: #1a6e9c;
    padding: 0 3px 0 4px;
    box-sizing: border-box;
    white-space: nowrap;
  }

  .row {
    display: grid;
    height: 41px;
    background: #fff;
  }
  .row.alt {
    background: #ebebeb;
  }
  .row.head {
    height: 24px;
    box-sizing: border-box;
    background: #fff;
    color: #1a6e9c;
    border-bottom: 2px solid #1a6e96;
  }
  .row.head .c {
    padding: 4px 0 0 10px;
    justify-content: flex-start;
    overflow: hidden;
    white-space: nowrap;
  }
  .row.head .ind {
    background: #efefef;
  }
  .row.head .chk {
    justify-content: center;
    padding: 4px 0 0;
  }
  .row.head .cpf {
    padding-left: 7px;
  }
  .c {
    display: flex;
    align-items: center;
    min-width: 0;
    box-sizing: border-box;
    border-right: 1px solid #c8c8c8;
  }
  .c.pad {
    padding: 0 13px;
  }
  .c.pad.wide {
    padding-left: 14px;
  }
  .c.num {
    justify-content: flex-end;
  }
  .c.ind {
    background: #fff;
    justify-content: center;
  }
  .row:not(.head) .c.chk {
    justify-content: center;
    border-right: 2px solid #a0a0a0;
  }
  .c.sel {
    background: #cfcfcf;
  }
  .row:not(.head) .c.chk.sel {
    background: #e2e2e2;
  }
  .box {
    display: flex;
    align-items: center;
    justify-content: center;
    width: 14px;
    height: 14px;
    box-sizing: border-box;
    background: #fff;
    border: 1px solid #a8a8a8;
    font-size: 11px;
    color: #777;
  }

  .l-cols { grid-template-columns: 23px 41px 81px 203px 128px 99px 60px 83px; }
  .d-cols { grid-template-columns: 23px 41px 122px 122px 72px 113px 146px 31px; }
  .d-head { grid-template-columns: 23px 41px 122px 122px 72px 113px 146px 46px; }
  .r-cols { grid-template-columns: 291px 38px 119px 47px 78px 13px; }

  .grid-wrap {
    display: flex;
    background: #efefef;
  }
  .grid-main {
    overflow: hidden;
  }
  .left-wrap {
    height: 302px;
    flex: none;
    border-bottom: 1px solid #c4c4c4;
  }
  .vscroll {
    flex: 1;
    display: flex;
    flex-direction: column;
    align-items: center;
    justify-content: space-between;
    padding-top: 1px;
  }
  .vscroll.end {
    justify-content: flex-end;
    padding-bottom: 2px;
  }
  .vthumb {
    display: block;
    width: 15px;
    height: 17px;
    margin-top: auto;
    background: #fff;
    border: 1px solid #a0a0a0;
    box-sizing: border-box;
  }

  .sbtn {
    display: flex;
    align-items: center;
    justify-content: center;
    flex: none;
    width: 16px;
    height: 16px;
    box-sizing: border-box;
    background: #fff;
    border: 1px solid #a0a0a0;
  }
  i.left, i.right, i.up, i.down {
    display: block;
    width: 0;
    height: 0;
    border: 4px solid transparent;
  }
  i.left { border-right-color: #666; border-left-width: 0; }
  i.right { border-left-color: #666; border-right-width: 0; }
  i.up { border-bottom-color: #666; border-top-width: 0; }
  i.down { border-top-color: #666; border-bottom-width: 0; }

  .foot {
    display: flex;
    flex-direction: column;
    flex: none;
    background: #efefef;
    box-sizing: border-box;
  }
  .count {
    width: 38px;
    height: 24px;
    box-sizing: border-box;
    background: #fff;
    border: 1px solid #c8c8c8;
    text-align: right;
    padding: 5px 5px 0 0;
  }
  .hscroll {
    display: flex;
    justify-content: space-between;
  }
  .hthumb {
    display: flex;
  }
  .thumb {
    display: block;
    height: 16px;
    box-sizing: border-box;
    background: #fff;
    border: 1px solid #a0a0a0;
  }
  .f-left {
    flex: 1;
    padding-top: 5px;
  }
  .f-left .count { margin-left: 23px; }
  .f-left .hscroll { margin-top: 9px; padding: 0 0 0 1px; }
  .f-left .thumb { width: 76px; }

  .f-right {
    height: 55px;
    padding-top: 7px;
  }
  .f-right .count { margin-left: 21px; }
  .f-right .hscroll { margin-top: 7px; padding: 0 1px 0 0; }
  .f-right .thumb { width: 310px; }

  .f-dialog {
    height: 54px;
    padding-top: 7px;
  }
  .f-dialog .count { margin-left: 23px; }
  .f-dialog .hscroll { margin-top: 7px; padding: 0 1px 0 0; }
  .f-dialog .thumb { width: 229px; }

  /* janela da direita */
  .rwin {
    display: flex;
    flex-direction: column;
    flex: none;
    width: 598px;
    height: 521px;
    margin-top: 24px;
    padding: 3px;
    box-sizing: border-box;
    border: 1px solid #a0a0a0;
    background: #fff;
  }
  .r-title {
    display: flex;
    align-items: center;
    justify-content: flex-end;
    gap: 10px;
    flex: none;
    height: 23px;
    padding-right: 6px;
    box-sizing: border-box;
    background: #cddcf5;
    border-bottom: 1px solid #c0c0c0;
  }
  .r-close {
    color: #5a6a75;
    font-size: 12px;
  }
  .r-blank {
    height: 23px;
    flex: none;
  }
  .r-inner {
    display: flex;
    flex-direction: column;
    flex: 1;
    border: 1px solid #a8a8a8;
    box-sizing: border-box;
    padding: 0 2px 2px 0;
  }
  .bar-right {
    height: 32px;
    padding: 3px 0 0 0;
    box-sizing: border-box;
  }
  .grp-right {
    padding-right: 3px;
  }
  .r-body {
    height: 294px;
    flex: none;
    border-bottom: 1px solid #c4c4c4;
    box-sizing: border-box;
    overflow: hidden;
  }
  .clip {
    border-right: 0 !important;
    padding-left: 4px !important;
  }
  .side {
    display: flex;
    flex-direction: column;
    align-items: center;
    gap: 1px;
    width: 21px;
    height: 75px;
    margin: 4px 0 0 3px;
    padding-top: 3px;
    box-sizing: border-box;
    background: #dcdcdc;
    border: 1px solid #c8c8c8;
    border-right: 0;
  }
  .side span {
    writing-mode: vertical-rl;
    color: #222;
  }

  .bottom-tabs {
    display: flex;
    height: 8px;
    margin-top: 3px;
    gap: 4px;
    padding-left: 3px;
  }
  .bt {
    display: block;
    height: 8px;
    background: #e4e4e4;
    border: 1px solid #d0d0d0;
    box-sizing: border-box;
  }
  .b1 { width: 69px; }
  .b2 { width: 86px; }
  .b3 { width: 463px; }

  /* dialogo */
  .dialog {
    position: absolute;
    left: 329px;
    top: 113px;
    display: flex;
    flex-direction: column;
    width: 708px;
    height: 455px;
    box-sizing: border-box;
    background: #efefef;
    border: 1px solid #d6d6d6;
    box-shadow: inset 0 0 0 1px #d6d6d6;
  }
  .d-title {
    display: flex;
    align-items: center;
    justify-content: space-between;
    flex: none;
    height: 25px;
    padding: 0 8px 0 7px;
    box-sizing: border-box;
    background: #cddcf5;
    border-bottom: 2px solid #b0b0b0;
    color: #222;
    letter-spacing: 0;
  }
  .d-ctrl {
    display: flex;
    align-items: center;
    gap: 10px;
  }
  .sq {
    display: block;
    width: 8px;
    height: 8px;
    border: 1px solid #555;
  }
  .bar-dialog {
    height: 33px;
    background: #efefef;
  }
  .d-tabs {
    display: flex;
    align-items: flex-end;
    flex: none;
    position: relative;
    height: 25px;
    margin: 3px 8px 0 8px;
    background: #fff;
    padding-left: 1px;
    gap: 4px;
    letter-spacing: 0;
  }
  .d-tab {
    display: flex;
    align-items: center;
    justify-content: center;
    width: 127px;
    height: 21px;
    box-sizing: border-box;
    background: #fff;
    border: 1px solid #a0a0a0;
    border-bottom: 0;
    border-radius: 0 6px 0 0;
    color: #333;
  }
  .d-tab.cur {
    width: 286px;
    height: 24px;
    color: #3a2050;
  }
  .d-arrows {
    position: absolute;
    right: -2px;
    top: 1px;
    display: flex;
    align-items: center;
    justify-content: space-around;
    width: 38px;
    height: 19px;
    box-sizing: border-box;
    background: #e8e8e8;
    border: 1px solid #a0a0a0;
  }
  .tri-l, .tri-r {
    display: block;
    width: 0;
    height: 0;
    border: 5px solid transparent;
  }
  .tri-l { border-right-color: #2c6fd8; border-left-width: 0; }
  .tri-r { border-left-color: #777; border-right-width: 0; }

  .d-panel {
    display: flex;
    flex-direction: column;
    flex: none;
    width: 689px;
    height: 327px;
    margin-left: 9px;
    padding: 0 1px 2px;
    box-sizing: border-box;
    background: #fff;
    border: 1px solid #a0a0a0;
  }
  .bar-inner {
    height: 30px;
    padding-top: 3px;
    box-sizing: border-box;
  }
  .d-wrap {
    flex: none;
    height: 157px;
    border-bottom: 1px solid #c4c4c4;
    box-sizing: border-box;
    background: #fff;
  }
  .d-wrap .grid-main {
    height: 123px;
    border-bottom: 1px solid #e6e6e6;
    box-sizing: content-box;
  }
  .d-wrap .vscroll {
    background: #efefef;
    height: 156px;
    box-sizing: border-box;
  }
  .d-actions {
    display: flex;
    justify-content: flex-end;
    flex: 1;
    gap: 9px;
    padding: 12px 17px 0 0;
  }
  button {
    width: 72px;
    height: 20px;
    padding: 0;
    background: #efefef;
    border: 2px solid #b4b4b4;
    box-shadow: inset 0 0 0 1px #f6f6f6;
    font: inherit;
    letter-spacing: 0;
    color: #333;
  }
  button.def {
    border-color: #c4c4c4;
  }

  /* anotacoes em vermelho */
  .mark {
    position: absolute;
    box-sizing: border-box;
    border: 3px solid #fe0000;
    pointer-events: none;
  }
  .m1 { left: 328px; top: 111px; width: 293px; height: 36px; }
  .m2 { left: 470px; top: 170px; width: 293px; height: 36px; }
  .m3 { left: 361px; top: 396px; width: 475px; height: 46px; }

  .cursor {
    position: absolute;
    left: 875px;
    top: 455px;
  }
</style>
